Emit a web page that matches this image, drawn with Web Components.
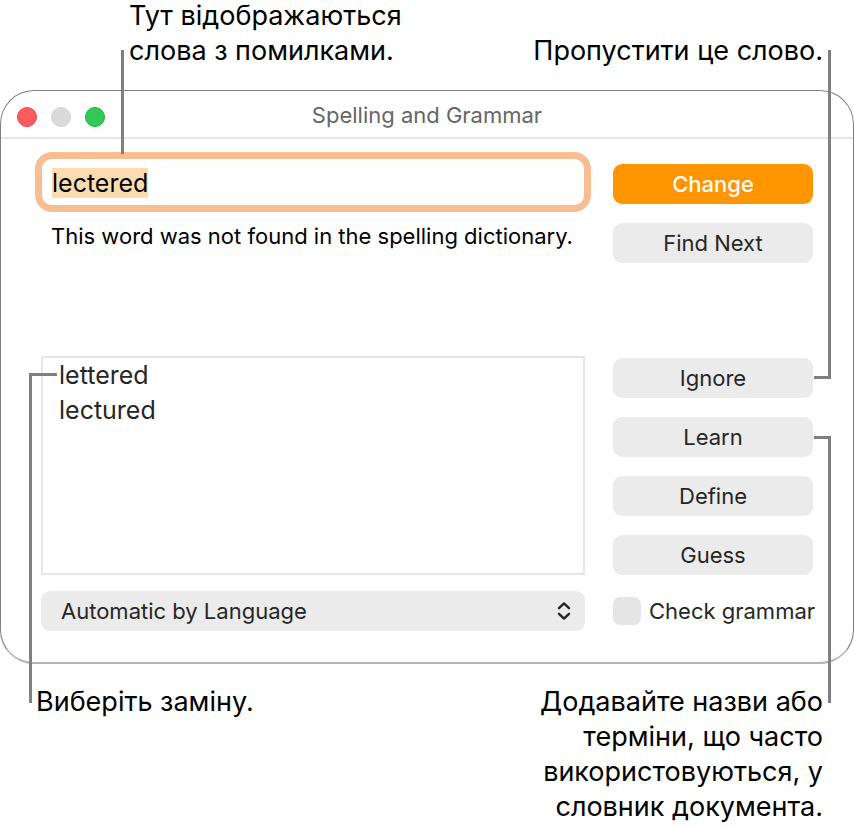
<!DOCTYPE html>
<html lang="uk">
<head>
  <meta charset="UTF-8">
  <meta name="viewport" content="width=device-width, initial-scale=1.0">
  <title>Spelling and Grammar</title>
  <style>
    body {
      margin: 0;
      background: #fff;
      color: #000;
      font-family: Inter, "Liberation Sans", sans-serif;
    }
  </style>
</head>
<body>
  <annotated-figure>
    <figure-caption slot="top-left">Тут відображаються<br>слова з помилками.</figure-caption>
    <figure-caption slot="top-right" align="right">Пропустити це слово.</figure-caption>

    <mac-window heading="Spelling and Grammar">
      <spelling-panel></spelling-panel>
    </mac-window>

    <figure-caption slot="bottom-left">Виберіть заміну.</figure-caption>
    <figure-caption slot="bottom-right" align="right">Додавайте назви або<br>терміни, що часто<br>використовуються, у<br>словник документа.</figure-caption>
  </annotated-figure>

  <script>
    // Figure: captions above and below, leader lines over the window
    class AnnotatedFigure extends HTMLElement {
      constructor() {
        super();
        this.attachShadow({ mode: 'open' });
      }

      connectedCallback() {
        this.shadowRoot.innerHTML = `
          <style>
            :host {
              display: block;
              position: relative;
            }

            .captions {
              display: flex;
              justify-content: space-between;
            }

            .above {
              box-sizing: border-box;
              height: 90px;
              align-items: flex-end;
              padding: 0 31px 22px 129px;
            }

            .below {
              align-items: flex-start;
              padding: 20px 31px 0 36px;
            }

            .line {
              position: absolute;
              box-sizing: border-box;
              border: 0 solid #808080;
              pointer-events: none;
            }

            .to-field {
              left: 121px;
              top: 50px;
              height: 104px;
              border-left-width: 3px;
            }

            .to-list {
              left: 29px;
              top: 373px;
              width: 28px;
              height: 330px;
              border-width: 3px 0 0 3px;
            }

            .to-ignore {
              right: 23px;
              top: 50px;
              width: 17px;
              height: 329px;
              border-width: 0 3px 3px 0;
            }

            .to-learn {
              right: 23px;
              top: 436px;
              width: 17px;
              height: 267px;
              border-width: 3px 3px 0 0;
            }
          </style>

          <div class="captions above">
            <slot name="top-left"></slot>
            <slot name="top-right"></slot>
          </div>
          <slot></slot>
          <div class="captions below">
            <slot name="bottom-left"></slot>
            <slot name="bottom-right"></slot>
          </div>

          <div class="line to-field"></div>
          <div class="line to-list"></div>
          <div class="line to-ignore"></div>
          <div class="line to-learn"></div>
        `;
      }
    }

    class FigureCaption extends HTMLElement {
      constructor() {
        super();
        this.attachShadow({ mode: 'open' });
      }

      connectedCallback() {
        this.shadowRoot.innerHTML = `
          <style>
            :host {
              display: block;
              font-size: 27px;
              line-height: 35px;
              white-space: nowrap;
            }

            :host([align="right"]) {
              text-align: right;
            }
          </style>
          <slot></slot>
        `;
      }
    }

    // Window frame with title bar
    class MacWindow extends HTMLElement {
      constructor() {
        super();
        this.attachShadow({ mode: 'open' });
      }

      connectedCallback() {
        this.shadowRoot.innerHTML = `
          <style>
            :host {
              display: block;
              border: 1px solid #808080;
              border-bottom: 2px solid #b2b2b2;
              border-radius: 34px;
              background: #fff;
            }

            header {
              display: grid;
              grid-template-columns: 1fr auto 1fr;
              align-items: center;
              height: 44px;
              padding: 2px 16px 0;
              border-bottom: 2px solid #e6e6e6;
            }

            .lights {
              display: flex;
              gap: 14px;
              padding-top: 4px;
            }

            .lights button {
              width: 20px;
              height: 20px;
              padding: 0;
              border: 1px solid #f8404a;
              border-radius: 50%;
              background: #ff5a5f;
            }

            .lights .minimize {
              border-color: #d3d3d3;
              background: #dadada;
            }

            .lights .zoom {
              border-color: #12b73c;
              background: #34c759;
            }

            h1 {
              margin: 0;
              color: #666;
              font-size: 22px;
              font-weight: 400;
              line-height: 28px;
            }
          </style>

          <header>
            <div class="lights">
              <button type="button" aria-label="Close"></button>
              <button type="button" class="minimize" aria-label="Minimize"></button>
              <button type="button" class="zoom" aria-label="Zoom"></button>
            </div>
            <h1>${this.getAttribute('heading')}</h1>
          </header>
          <slot></slot>
        `;
      }
    }

    class PushButton extends HTMLElement {
      constructor() {
        super();
        this.attachShadow({ mode: 'open' });
      }

      connectedCallback() {
        this.shadowRoot.innerHTML = `
          <style>
            :host {
              display: block;
            }

            button {
              display: block;
              width: 100%;
              height: 40px;
              padding: 0;
              border: none;
              border-radius: 9px;
              background: #ebebeb;
              color: #262626;
              font: inherit;
              font-size: 22px;
              line-height: 28px;
            }

            :host([primary]) button {
              background: #ff9500;
              color: #fff;
              font-weight: 500;
            }
          </style>
          <button type="button"><slot></slot></button>
        `;
      }
    }

    // Panel contents
    class SpellingPanel extends HTMLElement {
      constructor() {
        super();
        this.attachShadow({ mode: 'open' });
      }

      connectedCallback() {
        this.render();
        this.selectWord();
      }

      render() {
        this.shadowRoot.innerHTML = `
          <style>
            :host {
              display: grid;
              grid-template-columns: 1fr 200px;
              column-gap: 28px;
              padding: 19px 40px 31px;
              color: #262626;
              font-size: 22px;
              line-height: 28px;
            }

            .word {
              min-height: 198px;
            }

            .word input {
              display: block;
              box-sizing: border-box;
              width: 100%;
              height: 48px;
              padding: 2px 10px 0;
              border: 1px solid #f8be92;
              border-radius: 11px;
              outline: none;
              box-shadow: 0 0 0 6px #f8be92;
              background: #fff;
              color: #000;
              font: inherit;
              font-size: 25px;
            }

            .word input::selection {
              background: #ffdbb0;
              color: #000;
            }

            .word p {
              margin: 16px 10px 0;
              color: #000;
              white-space: nowrap;
            }

            .buttons {
              display: flex;
              flex-direction: column;
              gap: 19px;
            }

            .word-actions {
              padding-top: 6px;
            }

            .list-actions {
              padding-top: 2px;
            }

            .suggestions {
              box-sizing: border-box;
              width: 100%;
              height: 100%;
              padding: 2px 0 0;
              border: 2px solid #e6e6e6;
              border-radius: 0;
              outline: none;
              appearance: none;
              background: #fff;
              color: inherit;
              font: inherit;
              font-size: 25px;
              overflow: hidden;
            }

            .suggestions option {
              padding: 0 16px;
              line-height: 35px;
              min-height: 35px;
            }

            .language,
            .grammar {
              margin-top: 16px;
              height: 40px;
            }

            .language {
              display: grid;
              align-items: center;
            }

            .language select {
              grid-area: 1 / 1;
              width: 100%;
              height: 40px;
              padding: 0 20px;
              border: none;
              border-radius: 9px;
              appearance: none;
              background: #ebebeb;
              color: inherit;
              font: inherit;
            }

            .language svg {
              grid-area: 1 / 1;
              justify-self: end;
              margin-right: 12px;
              pointer-events: none;
            }

            .grammar {
              display: flex;
              align-items: center;
              gap: 8px;
              white-space: nowrap;
            }

            .grammar input {
              flex: none;
              width: 28px;
              height: 28px;
              margin: 0;
              border-radius: 7px;
              appearance: none;
              background: #e5e5e5;
            }
          </style>

          <div class="word">
            <input type="text" value="lectered" aria-label="Word" spellcheck="false">
            <p>This word was not found in the spelling dictionary.</p>
          </div>
          <div class="buttons word-actions">
            <push-button primary>Change</push-button>
            <push-button>Find Next</push-button>
          </div>

          <div>
            <select class="suggestions" size="6" aria-label="Suggestions">
              <option>lettered</option>
              <option>lectured</option>
            </select>
          </div>
          <div class="buttons list-actions">
            <push-button>Ignore</push-button>
            <push-button>Learn</push-button>
            <push-button>Define</push-button>
            <push-button>Guess</push-button>
          </div>

          <div class="language">
            <select aria-label="Language">
              <option>Automatic by Language</option>
            </select>
            <svg width="18" height="20" viewBox="0 0 18 20" fill="none" stroke="#262626" stroke-width="2.4" stroke-linecap="round" stroke-linejoin="round">
              <path d="M4 7.2 9 2.4l5 4.8M4 12.8l5 4.8 5-4.8"/>
            </svg>
          </div>
          <div class="grammar">
            <input type="checkbox" id="grammar">
            <label for="grammar">Check grammar</label>
          </div>
        `;
      }

      selectWord() {
        const input = this.shadowRoot.querySelector('.word input');
        input.focus();
        input.select();
      }
    }

    customElements.define('push-button', PushButton);
    customElements.define('figure-caption', FigureCaption);
    customElements.define('mac-window', MacWindow);
    customElements.define('spelling-panel', SpellingPanel);
    customElements.define('annotated-figure', AnnotatedFigure);
  </script>
</body>
</html>
